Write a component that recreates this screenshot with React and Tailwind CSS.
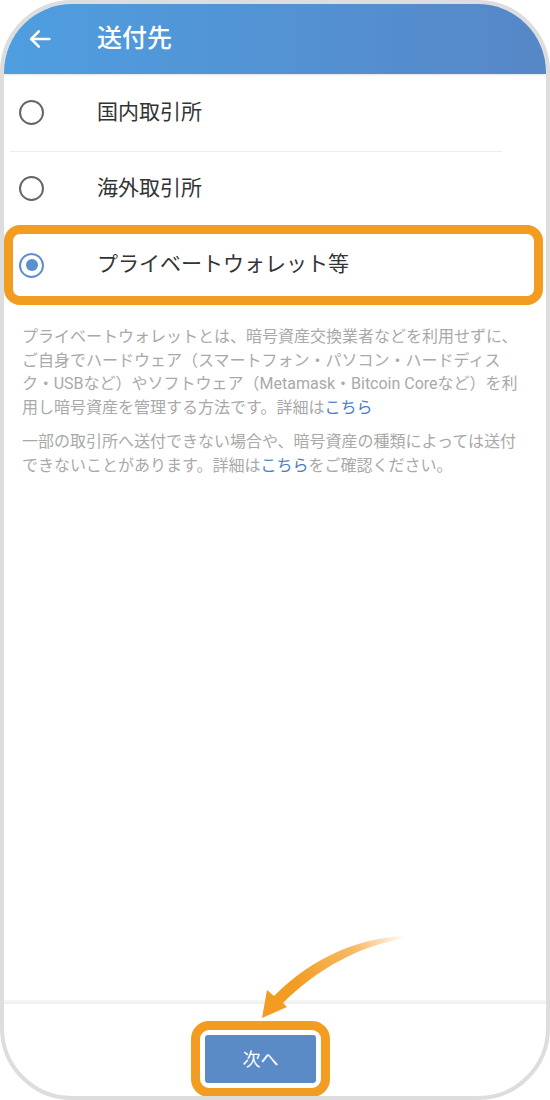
const font = { fontFamily: '"Roboto", "Noto Sans CJK JP", sans-serif' };

function Radio({ checked }) {
  if (checked) {
    return (
      <span className="flex h-[25px] w-[25px] shrink-0 items-center justify-center rounded-full border-[2.5px] border-[#5b8fcf]">
        <span className="h-[12px] w-[12px] rounded-full bg-[#5b8fcf]" />
      </span>
    );
  }
  return <span className="h-[25px] w-[25px] shrink-0 rounded-full border-[2.5px] border-[#666666]" />;
}

function Option({ label, checked }) {
  return (
    <div className="flex h-full items-center">
      <Radio checked={checked} />
      <span className="ml-[53px] text-[21px] text-[#333333]">{label}</span>
    </div>
  );
}

function Link({ children }) {
  return <span className="text-[#4a80c0]">{children}</span>;
}

export default function App() {
  return (
    <div className="relative h-[1100px] w-[550px] bg-white" style={font}>
      <div className="flex h-full flex-col overflow-hidden rounded-[72px] border-4 border-[#dddddd] bg-white">
        {/* Header */}
        <header className="flex h-[70px] shrink-0 items-center bg-gradient-to-r from-[#4e9ee0] to-[#5687c7] shadow-[0_1px_2px_rgba(0,0,0,0.12)]">
          <svg className="ml-[22px]" width="28" height="28" viewBox="0 0 24 24" fill="none" stroke="white" strokeWidth="2.2" strokeLinecap="round" strokeLinejoin="round">
            <path d="M20 12H4.5" />
            <path d="M11 5.5 4.5 12l6.5 6.5" />
          </svg>
          <h1 className="ml-[43px] text-[25px] font-medium text-white">送付先</h1>
        </header>

        {/* Options */}
        <div className="h-[77px] shrink-0 pl-[15px]">
          <Option label="国内取引所" />
        </div>
        <div className="ml-[6px] mr-[44px] h-px bg-[#eeeeee]" />
        <div className="h-[73px] shrink-0 pl-[15px]">
          <Option label="海外取引所" />
        </div>
        <div className="mr-[3px] h-[80px] shrink-0 rounded-[16px] border-[9px] border-[#f39c22] pl-[6px]">
          <Option label="プライベートウォレット等" checked />
        </div>

        {/* Notes */}
        <div className="mt-[20px] pl-[18px] text-[16px] leading-[23.7px] text-[#a9a9a9]">
          <p className="whitespace-nowrap">
            プライベートウォレットとは、暗号資産交換業者などを利用せずに、
            <br />
            ご自身でハードウェア（スマートフォン・パソコン・ハードディス
            <br />
            ク・USBなど）やソフトウェア（Metamask・Bitcoin Coreなど）を利
            <br />
            用し暗号資産を管理する方法です。詳細は<Link>こちら</Link>
          </p>
          <p className="mt-[10px] whitespace-nowrap">
            一部の取引所へ送付できない場合や、暗号資産の種類によっては送付
            <br />
            できないことがあります。詳細は<Link>こちら</Link>をご確認ください。
          </p>
        </div>

        <div className="flex-1" />

        {/* Footer */}
        <div className="h-[4px] shrink-0 bg-gradient-to-b from-[#f7f7f7] to-[#eeeeee]" />
        <div className="h-[92px] shrink-0 pt-[17px]">
          <div className="ml-[187px] w-[139px] rounded-[18px] border-[9px] border-[#f39c22] bg-white p-[5px]">
            <button className="flex h-[48px] w-full items-center justify-center rounded-[3px] bg-[#5a8bc6] text-[18px] text-white">
              次へ
            </button>
          </div>
        </div>
      </div>

      {/* Annotation arrow */}
      <svg className="pointer-events-none absolute left-0 top-0" width="550" height="1100" viewBox="0 0 550 1100">
        <defs>
          <linearGradient id="arrowFade" gradientUnits="userSpaceOnUse" x1="405" y1="937" x2="300" y2="990">
            <stop offset="0" stopColor="#f39c22" stopOpacity="0" />
            <stop offset="0.45" stopColor="#f5ad4a" stopOpacity="0.85" />
            <stop offset="1" stopColor="#f39c22" />
          </linearGradient>
        </defs>
        <path
          d="M405 936 C360 938 314 956 274 996 L267 990 L262 1018 L287 1007 L283 1003 C318 968 360 946 405 938 Z"
          fill="url(#arrowFade)"
        />
      </svg>
    </div>
  );
}
